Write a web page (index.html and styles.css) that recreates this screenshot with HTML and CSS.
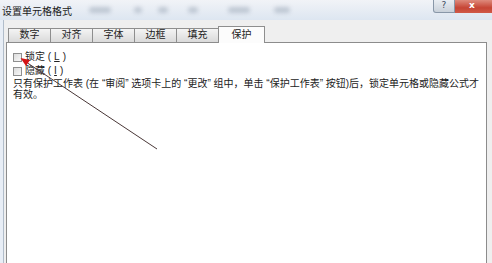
FILE: index.html
```html
<!DOCTYPE html>
<html>
<head>
    <meta charset="utf-8" />
    <title>设置单元格格式</title>
    <link rel="stylesheet" href="styles.css">
</head>
<body>
    <div class="window">
        <div class="titlebar">
            <span class="title">设置单元格格式</span>
            <span class="smudge s1"></span>
            <span class="smudge s2"></span>
            <span class="smudge s3"></span>
            <span class="smudge s4"></span>
            <span class="smudge s5"></span>
            <span class="smudge s6"></span>
            <div class="ctrls">
                <span class="help">?</span>
                <span class="close">x</span>
            </div>
        </div>
        <div class="body">
            <div class="tabs">
                <div class="tab">数字</div>
                <div class="tab">对齐</div>
                <div class="tab">字体</div>
                <div class="tab">边框</div>
                <div class="tab">填充</div>
                <div class="tab active">保护</div>
            </div>
            <div class="panel">
                <label class="opt"><span class="box"></span>锁定 (<u>L</u>)</label>
                <label class="opt"><span class="box"></span>隐藏 (<u>I</u>)</label>
                <p class="note">只有保护工作表 (在 “审阅” 选项卡上的 “更改” 组中，单击 “保护工作表” 按钮)后，锁定单元格或隐藏公式才<br>有效。</p>
            </div>
        </div>
        <!-- 标注箭头 -->
        <svg class="arrow" width="492" height="263" viewBox="0 0 492 263">
            <line x1="27.5" y1="63" x2="157" y2="149" stroke="#4a3838" stroke-width="1"/>
            <polygon points="20.5,58 26,66 30,60" fill="#d41414"/>
        </svg>
    </div>
</body>
</html>
```

FILE: styles.css
```css
* {
    margin: 0;
    padding: 0;
    box-sizing: border-box;
}
body {
    font-family: "Liberation Sans", "Noto Sans CJK SC", sans-serif;
    font-size: 10px;
    color: #222;
    background: #fff;
}
.window {
    position: relative;
    width: 492px;
    height: 263px;
    overflow: hidden;
    background: #e8eef6;
}
.titlebar {
    display: flex;
    align-items: flex-start;
    height: 20px;
    background: linear-gradient(#f1f3f7, #dde6f1);
}
.title {
    padding: 6px 0 0 2px;
    line-height: 11px;
    color: #1a1a1a;
}
.smudge {
    height: 6px;
    margin-top: 7px;
    background: #8c99aa;
    opacity: .45;
    filter: blur(2px);
    border-radius: 3px;
}
.s1 { width: 22px; margin-left: 17px; }
.s2 { width: 8px; margin-left: 23px; }
.s3 { width: 10px; margin-left: 16px; }
.s4 { width: 10px; margin-left: 20px; }
.s5 { width: 22px; margin-left: 30px; }
.s6 { width: 16px; margin-left: 24px; }
.ctrls {
    display: flex;
    margin-left: auto;
    height: 13px;
}
.help {
    width: 22px;
    border: 1px solid #8997a8;
    border-top: none;
    border-radius: 0 0 0 3px;
    background: linear-gradient(#e9edf2, #c9d1da);
    color: #3c4a5c;
    font-family: "DejaVu Sans", sans-serif;
    font-size: 9px;
    line-height: 11px;
    text-align: center;
}
.close {
    width: 37px;
    background: linear-gradient(#de8a7c, #c64535 60%, #d05a48);
    color: #fff;
    font-family: "DejaVu Sans", sans-serif;
    font-weight: bold;
    font-size: 9px;
    line-height: 11px;
    padding-left: 14px;
}
.body {
    height: 243px;
    margin-left: 3px;
    border-left: 1px solid #b1bdca;
    padding-left: 2px;
    background: #efefef;
}
.tabs {
    display: flex;
    align-items: flex-end;
    height: 22px;
    padding-left: 2px;
}
.tab {
    width: 43px;
    height: 14px;
    margin-right: -1px;
    border: 1px solid #8e8e8e;
    border-bottom: none;
    background: linear-gradient(#f4f4f4, #dadada);
    line-height: 12px;
    text-align: center;
    color: #222;
}
.tab.active {
    position: relative;
    z-index: 1;
    width: 47px;
    height: 17px;
    margin-bottom: -1px;
    background: #fcfcfc;
    line-height: 15px;
}
.panel {
    height: 230px;
    margin-right: 5px;
    border: 1px solid #8c8c8c;
    border-bottom: none;
    padding: 7px 0 0 6px;
    background: #fff;
}
.opt {
    display: flex;
    align-items: center;
    gap: 3px;
    height: 14px;
    line-height: 12px;
}
.box {
    width: 9px;
    height: 9px;
    border: 1px solid #8f8f8f;
    background: linear-gradient(135deg, #dcdcdc, #f8f8f8);
}
.note {
    line-height: 11px;
    white-space: nowrap;
}
.arrow {
    position: absolute;
    left: 0;
    top: 0;
    pointer-events: none;
}
```
